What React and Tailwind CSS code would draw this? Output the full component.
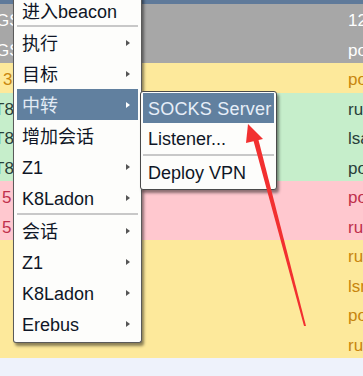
const rows = [
    { bg: "bg-[#a7a7a7]", fg: "text-white", left: "GS", pad: "-ml-[4px]", right: "12" },
    { bg: "bg-[#a7a7a7]", fg: "text-white", left: "GS", pad: "-ml-[4px]", right: "po" },
    { bg: "bg-[#fde99b]", fg: "text-[#c8860e]", left: "3", pad: "pl-[3px]", right: "po" },
    { bg: "bg-[#c6eecb]", fg: "text-[#28403a]", left: "T8", pad: "-ml-[6px]", right: "ru" },
    { bg: "bg-[#c6eecb]", fg: "text-[#28403a]", left: "T8", pad: "-ml-[6px]", right: "lsa" },
    { bg: "bg-[#c6eecb]", fg: "text-[#28403a]", left: "T8", pad: "-ml-[6px]", right: "po" },
    { bg: "bg-[#ffc8cf]", fg: "text-[#c0304c]", left: "5", pad: "pl-[2px]", right: "po" },
    { bg: "bg-[#ffc8cf]", fg: "text-[#c0304c]", left: "5", pad: "pl-[2px]", right: "ru" },
    { bg: "bg-[#fde99b]", fg: "text-[#c8860e]", left: "", pad: "", right: "ru" },
    { bg: "bg-[#fde99b]", fg: "text-[#c8860e]", left: "", pad: "", right: "lsn" },
    { bg: "bg-[#fde99b]", fg: "text-[#c8860e]", left: "", pad: "", right: "po" },
    { bg: "bg-[#fde99b]", fg: "text-[#c8860e]", left: "", pad: "", right: "ru" },
];

const Caret = ({ light }) => (
    <span className={`h-0 w-0 border-y-[3.5px] border-l-[4px] border-y-transparent ${light ? "border-l-white" : "border-l-[#555]"}`} />
);

const Item = ({ label, sub, active }) => (
    <div className={`flex h-[31px] items-center justify-between pl-[5px] pr-[8px] ${active ? "bg-[#61809f] text-[#e2ebf5]" : "text-[#0f1626]"}`}>
        <span className="pt-[3px]">{label}</span>
        {sub && <Caret light={active} />}
    </div>
);

const Sep = () => (
    <div className="h-[2px] bg-[#c8c8c8]" />
);

export default function App() {
    return (
        <div
            className="relative h-[376px] w-[363px] overflow-hidden bg-[#eef2fb]"
            style={{ fontFamily: '"Liberation Sans", "Noto Sans CJK SC", sans-serif' }}
        >
            {/* table behind */}
            <div className="h-[4px] bg-[#5f7a9a]" />
            <div className="flex h-[344px] flex-col">
                {rows.map((r, i) => (
                    <div key={i} className={`flex flex-1 items-center pt-[4px] text-[17px] ${r.bg} ${r.fg}`}>
                        <span className="w-[14px] overflow-hidden whitespace-nowrap">
                            <span className={`block ${r.pad}`}>{r.left}</span>
                        </span>
                        <span className="ml-auto w-[15px] overflow-hidden whitespace-nowrap">{r.right}</span>
                    </div>
                ))}
            </div>

            {/* main context menu */}
            <div className="absolute left-[13px] top-[-5px] w-[129px] rounded-b-[3px] border border-t-0 border-[#5a5a5a] bg-[#fdfdfb] px-[3px] pb-[3px] text-[18px] leading-none shadow-[2px_3px_3px_rgba(0,0,0,0.45)]">
                <div className="flex h-[30px] items-center pl-[5px] text-[#0f1626]">
                    <span className="pt-[4px]">进入beacon</span>
                </div>
                <Sep />
                <Item label="执行" sub />
                <Item label="目标" sub />
                <Item label="中转" sub active />
                <Item label="增加会话" />
                <Item label="Z1" sub />
                <Item label="K8Ladon" sub />
                <Sep />
                <Item label="会话" sub />
                <Item label="Z1" sub />
                <Item label="K8Ladon" sub />
                <Item label="Erebus" sub />
            </div>

            {/* submenu */}
            <div className="absolute left-[140px] top-[91px] w-[137px] rounded-[3px] border border-[#4a4a4a] bg-[#fdfdfb] px-[2px] pb-[2px] pt-[1px] text-[18px] leading-none shadow-[2px_3px_3px_rgba(0,0,0,0.45)]">
                <div className="flex h-[30px] items-center bg-[#61809f] pl-[5px] text-[#e6eef8]">
                    <span className="pt-[2px] tracking-[0.2px]">SOCKS Server</span>
                </div>
                <div className="flex h-[30px] items-center pl-[5px] text-[#0f1626]">
                    <span className="pt-[2px]">Listener...</span>
                </div>
                <div className="py-[1px]">
                    <div className="h-[2px] bg-[#c8c8c8]" />
                </div>
                <div className="flex h-[30px] items-center pl-[5px] text-[#0f1626]">
                    <span className="pt-[2px]">Deploy VPN</span>
                </div>
            </div>

            {/* red annotation arrow */}
            <svg className="absolute left-0 top-0" width="363" height="376" viewBox="0 0 363 376">
                <polygon points="248,124 263,139 246,143" fill="#f23030" />
                <polygon points="253,139 258,138 306,326 304,326" fill="#f23030" />
            </svg>
        </div>
    );
}
